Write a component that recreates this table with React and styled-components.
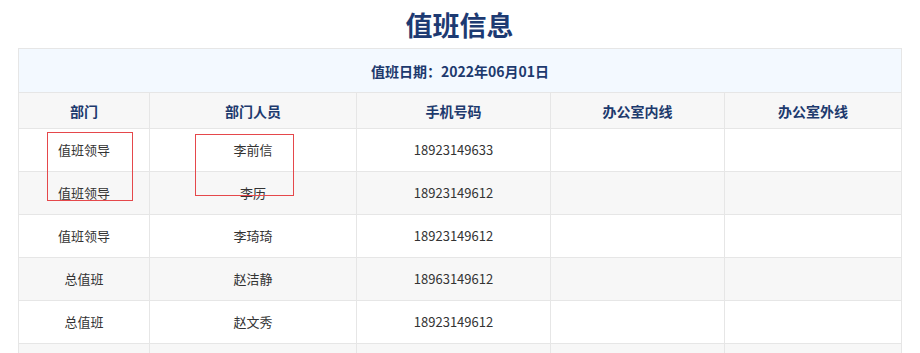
import React from "react";
import styled, { createGlobalStyle } from "styled-components";

const Global = createGlobalStyle`
  html, body { margin: 0; padding: 0; background: #fff; }
  body { font-family: "Noto Sans CJK SC", "Noto Sans", sans-serif; }
`;

const Page = styled.div`
  width: 920px;
  padding: 0 19px 0 18px;
  box-sizing: border-box;
`;

const Title = styled.h1`
  margin: 0;
  padding-top: 5px;
  height: 48px;
  box-sizing: border-box;
  line-height: 40px;
  text-align: center;
  font-size: 27px;
  font-weight: 700;
  color: #1d3a72;
`;

const TableWrap = styled.div`
  position: relative;
`;

const Table = styled.table`
  width: 883px;
  border-collapse: collapse;
  table-layout: fixed;
  border: 1px solid #e3e3e3;
`;

const Cell = styled.td`
  border: 1px solid #e6e6e6;
  text-align: center;
  padding: 0;
  line-height: 18px;
  height: ${(p) => p.$h}px;
  font-size: ${(p) => (p.$head ? 14 : 13)}px;
  font-weight: ${(p) => (p.$head ? 700 : 400)};
  color: ${(p) => (p.$head ? "#1d3a6e" : "#333")};
`;

const Row = styled.tr`
  background: ${(p) => p.$bg};
`;

const Mark = styled.div`
  position: absolute;
  border: 1px solid #e5484b;
  box-sizing: border-box;
  left: ${(p) => p.$x}px;
  top: ${(p) => p.$y}px;
  width: ${(p) => p.$w}px;
  height: ${(p) => p.$hh}px;
  pointer-events: none;
`;

const widths = [131, 207, 194, 174, 177];
const heads = ["部门", "部门人员", "手机号码", "办公室内线", "办公室外线"];
const rows = [
  ["值班领导", "李前信", "18923149633"],
  ["值班领导", "李历", "18923149612"],
  ["值班领导", "李琦琦", "18923149612"],
  ["总值班", "赵洁静", "18963149612"],
  ["总值班", "赵文秀", "18923149612"],
  ["", "", ""],
];

export default function App() {
  return (
    <Page>
      <Global />
      <Title>值班信息</Title>
      <TableWrap>
        <Table>
          <colgroup>
            {widths.map((w, i) => (
              <col key={i} style={{ width: w }} />
            ))}
          </colgroup>
          <tbody>
            <Row $bg="#f3f9ff">
              <Cell $head $h={43} colSpan={5}>
                值班日期：2022年06月01日
              </Cell>
            </Row>
            <Row $bg="#f7f7f7">
              {heads.map((h) => (
                <Cell $head $h={35} key={h}>
                  {h}
                </Cell>
              ))}
            </Row>
            {rows.map((r, i) => (
              <Row key={i} $bg={i % 2 ? "#f7f7f7" : "#fff"}>
                <Cell $h={42}>{r[0]}</Cell>
                <Cell $h={42}>{r[1]}</Cell>
                <Cell $h={42}>{r[2]}</Cell>
                <Cell $h={42}></Cell>
                <Cell $h={42}></Cell>
              </Row>
            ))}
          </tbody>
        </Table>
        <Mark $x={29} $y={84} $w={86} $hh={69} />
        <Mark $x={177} $y={86} $w={99} $hh={62} />
      </TableWrap>
    </Page>
  );
}
